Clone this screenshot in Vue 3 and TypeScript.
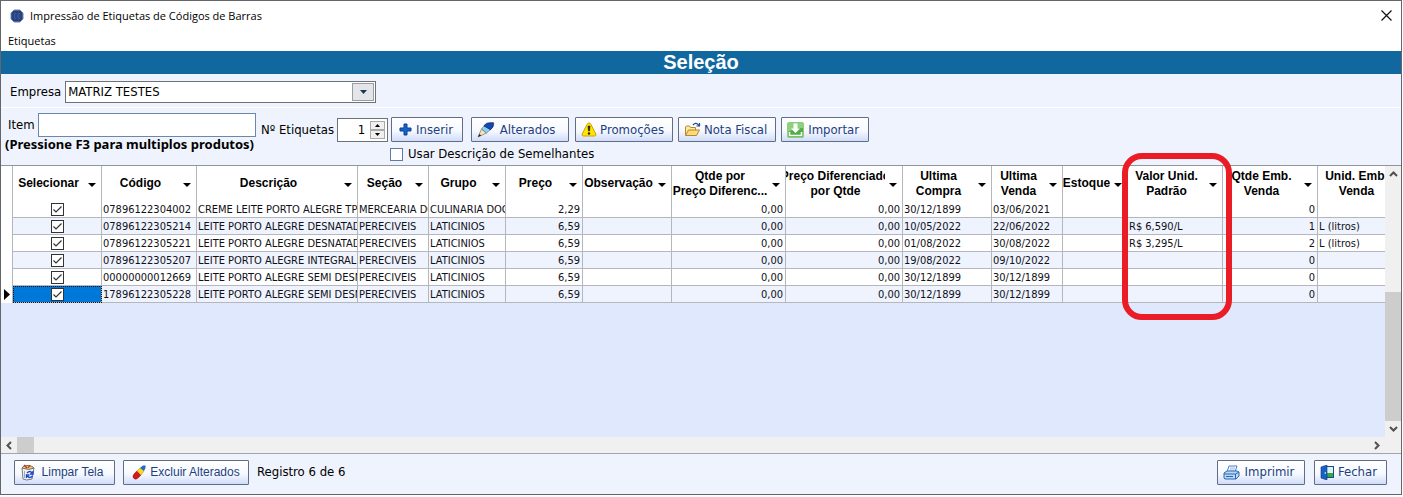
<script setup lang="ts">
import { ref } from 'vue'

interface Column {
  key: string
  lines: string[]
  width: number
  align?: 'right'
}

interface Row {
  selected: boolean
  values: Record<string, string>
}

const columns: Column[] = [
  { key: 'codigo', lines: ['Código'], width: 95 },
  { key: 'descricao', lines: ['Descrição'], width: 161 },
  { key: 'secao', lines: ['Seção'], width: 71 },
  { key: 'grupo', lines: ['Grupo'], width: 77 },
  { key: 'preco', lines: ['Preço'], width: 77, align: 'right' },
  { key: 'obs', lines: ['Observação'], width: 89 },
  { key: 'qtdeDif', lines: ['Qtde por', 'Preço Diferenc...'], width: 114, align: 'right' },
  { key: 'precoDif', lines: ['Preço Diferenciado', 'por Qtde'], width: 117, align: 'right' },
  { key: 'compra', lines: ['Ultima', 'Compra'], width: 89 },
  { key: 'venda', lines: ['Ultima', 'Venda'], width: 71 },
  { key: 'estoque', lines: ['Estoque'], width: 65 },
  { key: 'valor', lines: ['Valor Unid.', 'Padrão'], width: 95 },
  { key: 'qtdeEmb', lines: ['Qtde Emb.', 'Venda'], width: 95, align: 'right' },
  { key: 'unidEmb', lines: ['Unid. Emb.', 'Venda'], width: 95 },
]

function row(
  codigo: string, descricao: string, secao: string, grupo: string, preco: string,
  compra: string, venda: string, valor: string, qtdeEmb: string, unidEmb: string,
): Row {
  return {
    selected: true,
    values: {
      codigo, descricao, secao, grupo, preco, obs: '', qtdeDif: '0,00', precoDif: '0,00',
      compra, venda, estoque: '', valor, qtdeEmb, unidEmb,
    },
  }
}

const rows = ref<Row[]>([
  row('07896122304002', 'CREME LEITE PORTO ALEGRE TP', 'MERCEARIA DOCE', 'CULINARIA DOCE', '2,29', '30/12/1899', '03/06/2021', '', '0', ''),
  row('07896122305214', 'LEITE PORTO ALEGRE DESNATADO', 'PERECIVEIS', 'LATICINIOS', '6,59', '10/05/2022', '22/06/2022', 'R$ 6,590/L', '1', 'L (litros)'),
  row('07896122305221', 'LEITE PORTO ALEGRE DESNATADO', 'PERECIVEIS', 'LATICINIOS', '6,59', '01/08/2022', '30/08/2022', 'R$ 3,295/L', '2', 'L (litros)'),
  row('07896122305207', 'LEITE PORTO ALEGRE INTEGRAL', 'PERECIVEIS', 'LATICINIOS', '6,59', '19/08/2022', '09/10/2022', '', '0', ''),
  row('00000000012669', 'LEITE PORTO ALEGRE SEMI DESNATADO', 'PERECIVEIS', 'LATICINIOS', '6,59', '30/12/1899', '30/12/1899', '', '0', ''),
  row('17896122305228', 'LEITE PORTO ALEGRE SEMI DESNATADO', 'PERECIVEIS', 'LATICINIOS', '6,59', '30/12/1899', '30/12/1899', '', '0', ''),
])

const current = ref(5)
const company = ref('MATRIZ TESTES')
const item = ref('')
const labels = ref(1)
const similar = ref(false)
</script>

<template>
  <main class="window">
    <header class="titlebar">
      <svg class="app-icon" width="14" height="14" viewBox="0 0 14 14" aria-hidden="true">
        <path d="M4 1h6l3 3v6l-3 3H4l-3-3V4z" fill="#27427c" stroke="#7486b0" />
        <path d="M6 4.5H4.5v5H6M10 4.5H8v5h2M8 7h2" fill="none" stroke="#3c5b9c" />
      </svg>
      <span class="caption">Impressão de Etiquetas de Códigos de Barras</span>
      <button class="close" aria-label="Close">
        <svg width="11" height="11" viewBox="0 0 11 11"><path d="M.5.5l10 10M10.5.5l-10 10" stroke="#111" stroke-width="1.2" /></svg>
      </button>
    </header>
    <nav class="menu"><a href="#">Etiquetas</a></nav>
    <h1>Seleção</h1>

    <section class="company">
      <label for="company">Empresa</label>
      <span class="combo">
        <select id="company" v-model="company"><option>MATRIZ TESTES</option></select>
        <i class="combo-arrow"><svg width="7" height="4" viewBox="0 0 7 4"><path d="M0 0h7L3.5 4z" fill="#123a55" /></svg></i>
      </span>
    </section>

    <section class="tools">
      <div class="item-group">
        <div class="item-line">
          <label for="item">Item</label>
          <input id="item" v-model="item" type="text">
        </div>
        <strong>(Pressione F3 para multiplos produtos)</strong>
      </div>
      <div class="actions">
        <div class="action-line">
          <label for="labels">Nº Etiquetas</label>
          <span class="spinner">
            <input id="labels" v-model="labels" type="number">
            <span class="steps">
              <button aria-label="+" @click="labels++"><svg width="5" height="3" viewBox="0 0 5 3"><path d="M0 3h5L2.5 0z" /></svg></button>
              <button aria-label="-" @click="labels--"><svg width="5" height="3" viewBox="0 0 5 3"><path d="M0 0h5L2.5 3z" /></svg></button>
            </span>
          </span>
          <button class="btn insert">
            <svg width="13" height="13" viewBox="0 0 13 13"><path d="M5 1h3v4h4v3H8v4H5V8H1V5h4z" fill="#1465c8" stroke="#0a3f94" /></svg>
            <span>Inserir</span>
          </button>
          <button class="btn changed">
            <svg width="18" height="16" viewBox="0 0 18 16">
              <path d="M1 15l3.500-8 5 4z" fill="#f4e3b8" stroke="#8a7350" stroke-width=".7" />
              <path d="M1 15l1.300-3 2 1.600z" fill="#222" />
              <path d="M4.500 7L8 3l6 4-4.500 4z" fill="#8fd0f2" stroke="#46759e" stroke-width=".7" />
              <path d="M7 4c1.500-3 4-3.500 9.500-3.300.5 2.500-.5 5-3 7z" fill="#1148b4" stroke="#0a2460" stroke-width=".7" />
            </svg>
            <span>Alterados</span>
          </button>
          <button class="btn promo">
            <svg width="16" height="15" viewBox="0 0 16 15">
              <path d="M8 1q1.200 0 1.800 1.200l5 9.800q.7 2-1.300 2h-11q-2 0-1.300-2l5-9.800Q6.800 1 8 1z" fill="#ffe800" stroke="#d89c00" />
              <path d="M7 4h2l-.4 5H7.400z" fill="#222" stroke="#222" stroke-width=".6" /><circle cx="8" cy="11.500" r="1.200" fill="#222" />
            </svg>
            <span>Promoções</span>
          </button>
          <button class="btn invoice">
            <svg width="17" height="15" viewBox="0 0 17 15">
              <path d="M1.500 13V5l1-1h3l1 1.500h5V8" fill="#ffe9a0" stroke="#b08a2c" />
              <path d="M1.500 13.500L4.500 8h11l-3 5.500z" fill="#ffd977" stroke="#b08a2c" />
              <path d="M9 3q3-3.500 6 .5M15.500 1v3h-3" fill="none" stroke="#24468c" stroke-width="1.200" />
            </svg>
            <span>Nota Fiscal</span>
          </button>
          <button class="btn import">
            <svg width="17" height="16" viewBox="0 0 17 16">
              <rect x=".5" y=".5" width="16" height="15" rx="1.500" fill="#52ad47" stroke="#8bcc7d" />
              <path d="M1 1h15v5Q8 6 1 10z" fill="#8ed17c" />
              <path d="M6.500 1.500h4v5H13l-4.500 4.500L4 6.500h2.500z" fill="#fff" />
              <path d="M2.500 10v3.500h12V10" fill="none" stroke="#fff" stroke-width="1.600" />
            </svg>
            <span>Importar</span>
          </button>
        </div>
        <label class="similar"><input v-model="similar" class="check" type="checkbox">Usar Descrição de Semelhantes</label>
      </div>
    </section>

    <section class="grid">
      <div class="viewport">
        <table>
          <colgroup>
            <col class="c-mark"><col class="c-check">
            <col v-for="c in columns" :key="c.key" :style="{ width: c.width + 'px' }">
          </colgroup>
          <thead>
            <tr>
              <th></th>
              <th><div class="head"><span class="head-text"><span>Selecionar</span></span><i class="arrow"></i></div></th>
              <th v-for="c in columns" :key="c.key">
                <div class="head">
                  <span class="head-text"><span v-for="l in c.lines" :key="l">{{ l }}</span></span>
                  <i class="arrow"></i>
                </div>
              </th>
            </tr>
          </thead>
          <tbody>
            <tr v-for="(r, i) in rows" :key="r.values.codigo" :class="{ odd: i % 2 === 1 }" @click="current = i">
              <td class="mark"><svg v-if="i === current" width="6" height="11" viewBox="0 0 6 11"><path d="M0 0l6 5.500L0 11z" /></svg></td>
              <td class="tick" :class="{ current: i === current }">
                <input v-model="r.selected" class="check small" type="checkbox" :aria-label="r.values.descricao">
              </td>
              <td v-for="c in columns" :key="c.key" :class="c.align">{{ r.values[c.key] }}</td>
            </tr>
          </tbody>
        </table>
      </div>
      <div class="vbar">
        <button aria-label="Up"><svg width="9" height="6" viewBox="0 0 9 6"><path d="M1 5l3.500-3.500L8 5" /></svg></button>
        <div class="vtrack"><div class="vthumb"></div></div>
        <button aria-label="Down"><svg width="9" height="6" viewBox="0 0 9 6"><path d="M1 1l3.500 3.500L8 1" /></svg></button>
      </div>
      <div class="hbar">
        <button aria-label="Left"><svg width="6" height="9" viewBox="0 0 6 9"><path d="M5 1L1.500 4.500 5 8" /></svg></button>
        <div class="hthumb"></div>
        <button class="right-step" aria-label="Right"><svg width="6" height="9" viewBox="0 0 6 9"><path d="M1 1l3.500 3.500L1 8" /></svg></button>
      </div>
      <div class="highlight"></div>
    </section>

    <footer>
      <button class="btn arial clear">
        <svg width="16" height="17" viewBox="0 0 16 17">
          <path d="M2 4l1 11q3 2 9 0l2-11z" fill="#f0f1f6" stroke="#777b88" />
          <path d="M2 4q1-3 6-2.500T14 4q-5 3-12 0z" fill="#f0d060" stroke="#77706a" />
          <path d="M4 1l3 3M10 1L8 4" stroke="#c03028" stroke-width="1.300" />
          <path d="M4.500 7v7" stroke="#a5a9b5" />
          <path d="M7 9q3-3 5 0M13 7v3h-3M12.500 12q-3 3-5 0M6.500 14v-3h3" fill="none" stroke="#1746c8" stroke-width="1.400" />
        </svg>
        <span>Limpar Tela</span>
      </button>
      <button class="btn arial remove">
        <svg width="14" height="15" viewBox="0 0 14 15">
          <path d="M2 9l3-3 4 4-3 3q-2 2-4 .5T2 9z" fill="#d81818" stroke="#8c1010" stroke-width=".6" />
          <path d="M5 6l3-3 4 3-3 4z" fill="#ffd820" stroke="#c09a10" stroke-width=".6" />
          <path d="M8 3l3-2.500h2.500V3L12 6z" fill="#2468c8" />
        </svg>
        <span>Excluir Alterados</span>
      </button>
      <span class="status">Registro 6 de 6</span>
      <button class="btn print">
        <svg width="17" height="15" viewBox="0 0 17 15">
          <path d="M4 7l2-6h8l-2 6z" fill="#fff" stroke="#4a80c0" />
          <path d="M7 3h5M6.500 5h5" stroke="#8cb4e0" />
          <path d="M1 8l3-2h10l2 1v4l-3 3H2l-1-1z" fill="#b8d8f5" stroke="#2c68b4" />
          <path d="M1 9h11.500L16 7M12.500 9v5M3 11.500h7" fill="none" stroke="#2c68b4" />
        </svg>
        <span>Imprimir</span>
      </button>
      <button class="btn exit">
        <svg width="14" height="15" viewBox="0 0 14 15">
          <rect x="6.500" y="1.500" width="7" height="11" fill="#d9f2f2" stroke="#184a88" />
          <path d="M7 8h6v4H7z" fill="#38a838" />
          <path d="M1 2l6-2v15l-6-2z" fill="#1562c4" stroke="#0b3680" stroke-width=".6" />
          <circle cx="5.300" cy="8" r=".8" fill="#fff" />
        </svg>
        <span>Fechar</span>
      </button>
    </footer>
  </main>
</template>

<style>
body { margin: 0; background: #fff; }
</style>

<style scoped>
* { box-sizing: border-box; }
.window {
  display: flex;
  flex-direction: column;
  min-height: calc(100vh - 2px);
  margin: 0 1px 2px 0;
  border: 1px solid #65666b;
  background: #eef3fd;
  color: #000;
  font: 13px/16px "DejaVu Sans Condensed", "DejaVu Sans", sans-serif;
}
button, input, select { font: inherit; color: inherit; margin: 0; }
.titlebar { display: flex; align-items: center; height: 29px; padding: 0 9px; background: #fff; font: 11px/16px "Open Sans", sans-serif; }
.caption { margin-left: 6px; }
.close { display: flex; margin-left: auto; padding: 0; border: 0; background: none; }
.menu { height: 21px; padding: 3px 7px 0; background: #fff; font: 11px/16px "Open Sans", sans-serif; }
.menu a { color: inherit; text-decoration: none; }
h1 { margin: 0; background: #11689f; color: #fff; text-align: center; font: bold 20px/23px "Liberation Sans", Arial, sans-serif; }
.company { display: flex; align-items: center; gap: 4px; height: 34px; padding: 3px 9px 0; border-bottom: 1px solid #fff; }
.combo { position: relative; display: flex; width: 311px; height: 22px; }
.combo select { width: 100%; padding: 0 26px 0 2px; border: 1px solid #6d737b; border-radius: 0; background: #fff; appearance: none; }
.combo-arrow { position: absolute; top: 2px; right: 2px; bottom: 2px; display: flex; align-items: center; justify-content: center; width: 22px; border: 1px solid #9a9da2; background: #e4e5e8; pointer-events: none; }
.tools { display: flex; gap: 5px; height: 57px; padding: 5px 4px 0; }
.item-group { width: 251px; white-space: nowrap; }
.item-line { display: flex; align-items: center; gap: 3px; padding-left: 3px; }
.item-line input { flex: 1; min-width: 0; height: 24px; border: 1px solid #6b87ad; background: #fff; }
.item-group strong { display: block; font: bold 13px/14px "Noto Sans", sans-serif; }
.action-line { display: flex; align-items: center; gap: 3px; padding-top: 4px; }
.spinner { display: flex; width: 51px; height: 24px; padding: 2px; border: 1px solid #6d737b; background: #fff; }
.spinner input { flex: 1; min-width: 0; padding: 0 5px 0 0; border: 0; text-align: right; appearance: textfield; background: #fff; }
.spinner input::-webkit-inner-spin-button { appearance: none; }
.steps { display: flex; flex-direction: column; width: 15px; }
.steps button { flex: 1; display: flex; align-items: center; justify-content: center; padding: 0; border: 1px solid #a9a9a9; background: #f0f0f0; }
.btn {
  display: flex;
  align-items: center;
  height: 25px;
  padding: 0 7px;
  border: 1px solid #626c84;
  border-radius: 1px;
  background: linear-gradient(#fff, #f7f9ff 55%, #cfdcf9);
  color: #1d3f80;
  white-space: nowrap;
}
.btn span { flex: 1; text-align: center; }
.insert { width: 72px; padding: 0 5px 0 7px; }
.changed { width: 98px; margin-left: 5px; padding: 0 8px 0 5px; }
.promo { width: 98px; margin-left: 3px; padding: 0 5px; }
.invoice { width: 98px; margin-left: 2px; padding: 0 5px; }
.import { width: 88px; margin-left: 2px; padding: 0 5px; }
.similar { display: flex; align-items: center; gap: 5px; margin: 4px 0 0 129px; }
.check { display: block; flex: none; width: 13px; height: 13px; margin: 0; border: 1px solid #5d7ba3; background: #fff; appearance: none; }
.check.small { border-color: #333; margin: 0 auto; }
.check:checked { background: #fff url("data:image/svg+xml,%3Csvg xmlns='http://www.w3.org/2000/svg' viewBox='0 0 11 11'%3E%3Cpath d='M1.500 5.500l2.500 2.500 5.500-5.500' fill='none' stroke='%23333' stroke-width='1.200'/%3E%3C/svg%3E"); }
.grid {
  position: relative;
  flex: 1;
  display: grid;
  grid-template: minmax(0, 1fr) 16px / minmax(0, 1fr) 16px;
  border-top: 1px solid #92959c;
  border-bottom: 1px solid #a3a5ab;
  background: #f0f0f0;
}
.viewport { overflow: hidden; background: #dfe8fd; }
table { table-layout: fixed; width: 1411px; border-collapse: separate; border-spacing: 0; font-size: 11px; line-height: 14px; }
.c-mark { width: 12px; }
.c-check { width: 89px; }
th { height: 35px; padding: 0; border-right: 1px solid #b5b7bc; background: #fff; font: bold 12px/15px "Liberation Sans", Arial, sans-serif; }
.head { display: flex; align-items: center; }
.head-text { flex: 1; display: flex; flex-direction: column; align-items: center; min-width: 0; overflow: hidden; white-space: nowrap; }
.arrow { flex: none; margin: 2px 5px 0 4px; border: 4px solid transparent; border-top-color: #000; border-bottom: 0; }
td { height: 17px; padding: 2px 2px 0 1px; overflow: hidden; border-right: 1px solid #b5b7bc; border-bottom: 1px solid #b5b7bc; background: #fff; white-space: nowrap; color: #101018; }
.odd td { background: #eef3fd; }
td.right { text-align: right; }
td.tick { padding: 0; }
.odd .tick.current { background: #0078d7; outline: 1px dotted #111; outline-offset: -1px; }
tbody .mark.mark { padding: 0 0 0 3px; border-bottom: 0; background: #fff; }
.mark svg { display: block; }
.vbar { display: flex; flex-direction: column; }
.vbar button, .hbar button { display: flex; align-items: center; justify-content: center; width: 16px; height: 16px; padding: 0; border: 0; background: none; }
.vbar path, .hbar path { fill: none; stroke: #505050; stroke-width: 2; }
.vtrack { flex: 1; display: flex; flex-direction: column; justify-content: flex-end; }
.vthumb { height: 54%; background: #cdcdcd; }
.hbar { display: flex; }
.hthumb { width: 17px; background: #cdcdcd; }
.right-step { margin-left: auto; }
.highlight { position: absolute; top: -13px; left: 1121px; width: 110px; height: 167px; border: 6px solid #ea1c26; border-radius: 20px; pointer-events: none; }
footer { display: flex; align-items: center; height: 40px; padding: 0 14px 4px 13px; }
.arial { font: 12px/16px "Liberation Sans", Arial, sans-serif; }
.clear { width: 101px; padding: 0 5px; }
.remove { width: 126px; margin-left: 8px; padding: 0 4px 0 8px; }
.status { margin-left: 8px; }
.print { width: 88px; margin-left: auto; padding: 0 5px; }
.exit { width: 73px; margin-left: 9px; padding: 0 5px; }
</style>
